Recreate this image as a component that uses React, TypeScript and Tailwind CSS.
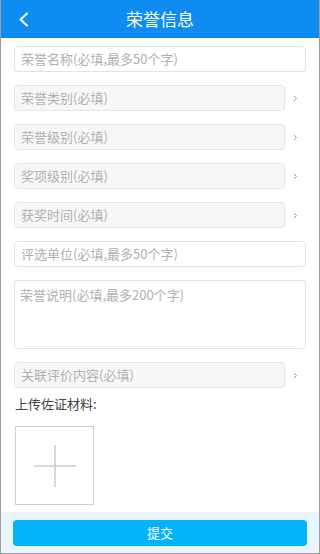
import React from 'react';

const selects = ['荣誉类别(必填)', '荣誉级别(必填)', '奖项级别(必填)', '获奖时间(必填)'];

function Chevron() {
  return (
    <div className="w-[21px] flex items-center justify-center">
      <svg width="5" height="7" viewBox="0 0 5 7" fill="none">
        <path d="M1 1l2.5 2.5L1 6" stroke="#999" strokeWidth="1" />
      </svg>
    </div>
  );
}

function SelectRow({ label }: { label: string }) {
  return (
    <div className="flex h-[26px]">
      <div className="flex-1 flex items-center px-[6px] rounded-[4px] border border-[#e6e6e6] bg-[#f7f7f7] text-[13px] text-[#b0b0b0]">
        {label}
      </div>
      <Chevron />
    </div>
  );
}

function TextRow({ label }: { label: string }) {
  return (
    <div className="flex items-center h-[26px] px-[6px] rounded-[4px] border border-[#e3e3e3] bg-white text-[13px] text-[#b0b0b0]">
      {label}
    </div>
  );
}

export default function App() {
  return (
    <div
      className="w-[320px] h-[554px] flex flex-col bg-white border-x border-b border-[#9e9e9e] overflow-hidden"
      style={{ fontFamily: '"Noto Sans CJK SC", "Noto Sans", sans-serif' }}
    >
      {/* HEADER */}
      <div className="relative h-[38px] shrink-0 bg-[#0f8cf1] border-b border-[#0b7fdd] flex items-center justify-center">
        <svg className="absolute left-[17px] top-[12px]" width="11" height="15" viewBox="0 0 11 15" fill="none">
          <path d="M9 1.5L2.5 7.5L9 13.5" stroke="white" strokeWidth="2" strokeLinecap="round" strokeLinejoin="round" />
        </svg>
        <span className="text-white text-[17px] leading-none">荣誉信息</span>
      </div>

      {/* FORM */}
      <div className="flex flex-col px-[13px] pt-[8px]">
        <TextRow label="荣誉名称(必填,最多50个字)" />
        <div className="flex flex-col gap-[13px] mt-[13px]">
          {selects.map((s) => (
            <SelectRow key={s} label={s} />
          ))}
          <TextRow label="评选单位(必填,最多50个字)" />
          <div className="h-[69px] px-[5px] pt-[4px] rounded-[4px] border border-[#e3e3e3] bg-white text-[13px] text-[#b0b0b0] leading-[20px]">
            荣誉说明(必填,最多200个字)
          </div>
          <SelectRow label="关联评价内容(必填)" />
        </div>
        <p className="mt-[7px] text-[13px] text-[#444] leading-[18px] pl-[1px]">上传佐证材料:</p>
        <div className="mt-[13px] ml-[1px] w-[79px] h-[79px] border border-[#cfcfcf] flex items-center justify-center">
          <svg width="42" height="42" viewBox="0 0 42 42">
            <path d="M21 0v42M0 21h42" stroke="#cccccc" strokeWidth="1.5" />
          </svg>
        </div>
      </div>

      {/* BOTTOM BAR */}
      <div className="mt-auto h-[41px] bg-[#eaf4fd] px-[12px] pt-[7px]">
        <button className="w-full h-[26px] rounded-[4px] bg-[#02b3fa] text-white text-[13px]">提交</button>
      </div>
    </div>
  );
}
